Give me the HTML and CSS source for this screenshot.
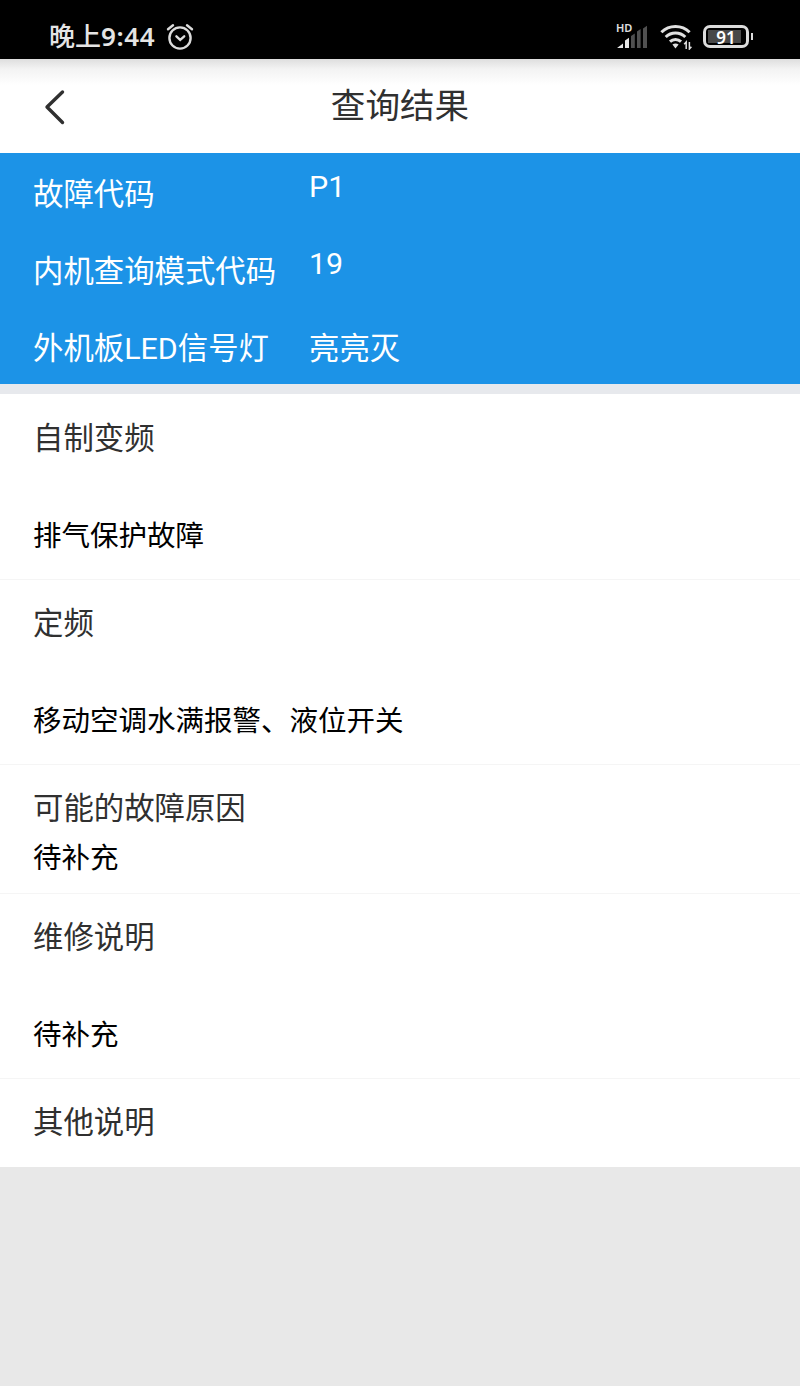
FILE: index.html
```html
<!DOCTYPE html>
<html lang="zh-CN">
<head>
  <meta charset="UTF-8">
  <meta name="viewport" content="width=device-width, initial-scale=1.0">
  <title>查询结果</title>
  <link rel="stylesheet" href="styles.css">
</head>
<body>

  <div class="status-bar">
    <span class="time">晚上<span class="clock">9:44</span></span>
    <svg class="alarm" width="28" height="28" viewBox="0 0 28 28" fill="none" stroke="#dcdcdc" stroke-width="2.4" stroke-linecap="round">
      <circle cx="14" cy="15" r="10.6"/>
      <path d="M10.4 13.3l3.8 3.5 4-3.5M2 6.2l5-4M26 6.2l-5-4"/>
    </svg>

    <div class="status-icons">
      <div class="signal">
        <span class="hd">HD</span>
        <svg width="32" height="26" viewBox="0 0 32 26">
          <path d="M1 24l6-4.5V24z M9 24v-7.5l4-2.7V24z" fill="#e6e6e6"/>
          <path d="M15 24V12l3.8-2.6V24z M21 24V7.6l3.6-2.6V24z M27 24V4.4l4-2.7V24z" fill="#505050"/>
        </svg>
      </div>
      <svg class="wifi" width="34" height="26" viewBox="0 0 34 26" fill="none" stroke="#e0e0e0" stroke-width="3">
        <path d="M1.4 8.2a20 20 0 0 1 28.2 0M5.7 13a14 14 0 0 1 19.6 0M10 17.6a8 8 0 0 1 11 0"/>
        <path d="M12.4 20.6q3.1-2.4 6.2 0l-3.1 3.8z" fill="#e0e0e0" stroke="none"/>
        <path d="M26.2 25v-7l-2 2.3M29.4 18v7l2-2.3" stroke-width="1.5"/>
      </svg>
      <div class="battery"><span class="level">91</span></div>
    </div>
  </div>

  <header class="header">
    <svg class="back" width="24" height="38" viewBox="0 0 24 38" fill="none" stroke="#303030" stroke-width="3.4" stroke-linecap="round" stroke-linejoin="round">
      <path d="M19.5 4L4 19l15.5 15.5"/>
    </svg>
    <h1>查询结果</h1>
  </header>

  <div class="codes">
    <div class="code-row">
      <span>故障代码</span>
      <span class="latin">P1</span>
    </div>
    <div class="code-row">
      <span>内机查询模式代码</span>
      <span class="latin">19</span>
    </div>
    <div class="code-row">
      <span>外机板LED信号灯</span>
      <span>亮亮灭</span>
    </div>
  </div>

  <main class="details">
    <section class="item">
      <h2>自制变频</h2>
      <p>排气保护故障</p>
    </section>
    <section class="item">
      <h2>定频</h2>
      <p>移动空调水满报警、液位开关</p>
    </section>
    <section class="item compact">
      <h2>可能的故障原因</h2>
      <p>待补充</p>
    </section>
    <section class="item">
      <h2>维修说明</h2>
      <p>待补充</p>
    </section>
    <section class="item">
      <h2>其他说明</h2>
    </section>
  </main>

</body>
</html>
```

FILE: styles.css
```css
* {
  box-sizing: border-box;
  margin: 0;
  padding: 0;
}

body {
  background: #e8e8e8;
  font-family: Roboto, "Noto Sans CJK SC", sans-serif;
  min-height: 100vh;
}

.status-bar {
  display: flex;
  align-items: center;
  height: 59px;
  padding: 14px 47px 0 49px;
  background: #000;
  color: #e4e4e4;
}

.time {
  font-size: 26px;
  font-weight: 500;
  line-height: 46px;
}

.clock {
  font-family: "Noto Sans", sans-serif;
  font-weight: 600;
  font-size: 26px;
  letter-spacing: 0.6px;
}

.alarm {
  margin-left: 11px;
}

.status-icons {
  display: flex;
  align-items: center;
  margin-left: auto;
}

.signal {
  position: relative;
  display: flex;
}

.hd {
  position: absolute;
  left: 0;
  top: -2px;
  color: #e0e0e0;
  font: 600 11px/12px "Noto Sans", sans-serif;
}

.wifi {
  margin: 0 9px 0 12px;
}

.battery {
  position: relative;
  width: 46px;
  height: 23px;
  margin-right: 4px;
  padding: 2px;
  border: 3px solid #dcdcdc;
  border-radius: 7px;
}

.battery::after {
  content: "";
  position: absolute;
  right: -7px;
  top: 5px;
  width: 2px;
  height: 7px;
  background: #dcdcdc;
}

.level {
  display: block;
  height: 13px;
  background: linear-gradient(to right, #484848 91%, #000 91%);
  color: #fff;
  font: 600 17px/15px "Noto Sans", sans-serif;
  text-align: center;
}

.header {
  display: grid;
  grid-template-columns: 100px 1fr 100px;
  align-items: center;
  height: 94px;
  background: linear-gradient(#dedede, #f3f3f3 10px, #fff 26px);
  color: #303030;
}

.back {
  margin: 2px 0 0 43px;
}

.header h1 {
  font-size: 34.6px;
  font-weight: 400;
  line-height: 94px;
  text-align: center;
}

.codes {
  background: #1c93e7;
  color: #fff;
  border-bottom: 10px solid #e7e9ed;
  height: 241px;
}

.code-row {
  display: grid;
  grid-template-columns: 276px 1fr;
  align-items: start;
  height: 77px;
  padding: 19px 33px 0;
  font-size: 30.4px;
  line-height: 45px;
}

.code-row .latin {
  line-height: 29px;
}

.details {
  background: #fff;
}

.item {
  padding: 22px 33px;
  border-top: 1px solid #f5f5f5;
}

.item:first-child {
  border-top-color: #fff;
}

.item h2 {
  color: #303030;
  font-size: 30.4px;
  font-weight: 400;
  line-height: 44px;
}

.item p {
  margin-top: 54px;
  margin-bottom: -1px;
  color: #000;
  font-size: 28.5px;
  line-height: 43px;
}

.compact {
  padding-bottom: 14px;
}

.compact p {
  margin-top: 6px;
}
```
